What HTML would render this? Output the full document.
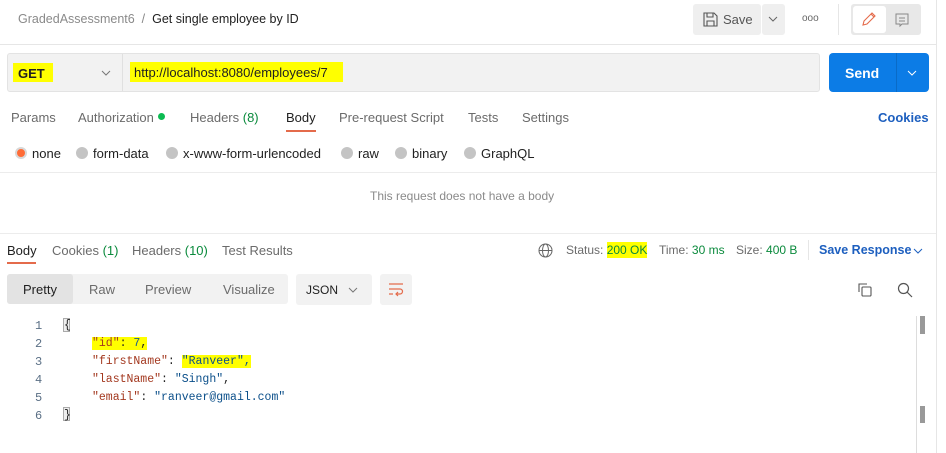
<!DOCTYPE html>
<html><head><style>
*{margin:0;padding:0;box-sizing:border-box}
body{width:946px;height:453px;background:#fff;font-family:"Liberation Sans",sans-serif;font-size:13px;color:#212121;position:relative;overflow:hidden}
.a{position:absolute;white-space:nowrap}
.g{color:#6b6b6b}
.hl{background:#ffff00}
.mono{font-family:"Liberation Mono",monospace;font-size:11.5px}
.rad{position:absolute;width:12px;height:12px;border-radius:50%;background:#c4c4c4}
.k{color:#a3381f}.s{color:#0b4f8a}
</style></head><body>
<div class="a" style="left:936px;top:0;width:1px;height:453px;background:#e6e6e6"></div>
<div class="a" style="left:0;top:44px;width:936px;height:1px;background:#e6e6e6"></div>
<div class="a" style="left:18px;top:12px;font-size:12.5px;color:#8a8a8a">GradedAssessment6 <span style="color:#888">&nbsp;/&nbsp;</span> <span style="color:#212121">Get single employee by ID</span></div>
<!-- save -->
<div class="a" style="left:693px;top:4px;width:68px;height:31px;background:#efefef;border-radius:3px"></div>
<svg class="a" style="left:703px;top:12px" width="15" height="15" viewBox="0 0 15 15" fill="none" stroke="#555" stroke-width="1.1"><path d="M1 1h10l3 3v10H1z M4 1v4h6V1 M4 14V9h7v5"/></svg>
<div class="a" style="left:723px;top:12px;font-size:13px;color:#555">Save</div>
<div class="a" style="left:762px;top:4px;width:23px;height:31px;background:#efefef;border-radius:3px"></div>
<svg class="a" style="left:768px;top:15px" width="10" height="8"><path d="M1 2l4 4 4-4" stroke="#666" fill="none"/></svg>
<div class="a" style="left:802px;top:13px;font-size:10px;color:#666">ooo</div>
<div class="a" style="left:838px;top:4px;width:1px;height:31px;background:#e6e6e6"></div>
<div class="a" style="left:851px;top:4px;width:70px;height:31px;background:#e8e8e8;border-radius:3px"></div>
<div class="a" style="left:853px;top:6px;width:33px;height:27px;background:#fff;border-radius:3px"></div>
<svg class="a" style="left:861px;top:11px" width="16" height="16" viewBox="0 0 16 16" fill="none" stroke="#e46b4b" stroke-width="1.1"><path d="M2 14l1-4 8-8 3 3-8 8z M10 3l3 3"/></svg>
<svg class="a" style="left:894px;top:12px" width="16" height="16" viewBox="0 0 16 16" fill="none" stroke="#888" stroke-width="1"><path d="M2 2h12v10H8l-2 2v-2H2z M5 6h6 M5 9h6"/></svg>
<!-- url bar -->
<div class="a" style="left:7px;top:53px;width:813px;height:39px;background:#f2f2f2;border:1px solid #e3e3e3;border-radius:3px"></div>
<div class="a" style="left:122px;top:54px;width:1px;height:37px;background:#e0e0e0"></div>
<div class="a hl" style="left:13px;top:63px;width:40px;height:19px"></div>
<div class="a" style="left:18px;top:66px;font-weight:bold;font-size:13px">GET</div>
<svg class="a" style="left:101px;top:69px" width="10" height="8"><path d="M1 2l4 4 4-4" stroke="#777" fill="none"/></svg>
<div class="a hl" style="left:130px;top:62px;width:213px;height:20px"></div>
<div class="a" style="left:134px;top:65px;font-size:13px;color:#212121">http://localhost:8080/employees/7</div>
<div class="a" style="left:829px;top:53px;width:100px;height:39px;background:#0c7ce6;border-radius:4px"></div>
<div class="a" style="left:896px;top:53px;width:1px;height:39px;background:#0a6bc7"></div>
<div class="a" style="left:845px;top:65px;font-weight:bold;font-size:14px;color:#fff">Send</div>
<svg class="a" style="left:907px;top:69px" width="10" height="8"><path d="M1 2l4 4 4-4" stroke="#fff" fill="none"/></svg>
<!-- tabs -->
<div class="a g" style="left:11px;top:110px">Params</div>
<div class="a g" style="left:78px;top:110px">Authorization</div>
<div class="a" style="left:158px;top:113px;width:7px;height:7px;border-radius:50%;background:#0cbb52"></div>
<div class="a g" style="left:190px;top:110px">Headers <span style="color:#0a8a3c">(8)</span></div>
<div class="a" style="left:286px;top:110px">Body</div>
<div class="a" style="left:286px;top:130px;width:30px;height:2px;background:#e46b4b"></div>
<div class="a g" style="left:339px;top:110px">Pre-request Script</div>
<div class="a g" style="left:468px;top:110px">Tests</div>
<div class="a g" style="left:522px;top:110px">Settings</div>
<div class="a" style="left:878px;top:110px;color:#1d5fbf;font-weight:bold">Cookies</div>
<!-- radios -->
<div class="rad" style="left:15px;top:147px;background:#ff6c37;border:2px solid #d8d8d8"></div>
<div class="a" style="left:32px;top:146px">none</div>
<div class="rad" style="left:76px;top:147px"></div><div class="a" style="left:93px;top:146px">form-data</div>
<div class="rad" style="left:166px;top:147px"></div><div class="a" style="left:183px;top:146px">x-www-form-urlencoded</div>
<div class="rad" style="left:341px;top:147px"></div><div class="a" style="left:358px;top:146px">raw</div>
<div class="rad" style="left:395px;top:147px"></div><div class="a" style="left:412px;top:146px">binary</div>
<div class="rad" style="left:464px;top:147px"></div><div class="a" style="left:481px;top:146px">GraphQL</div>
<div class="a" style="left:0;top:172px;width:936px;height:1px;background:#ececec"></div>
<div class="a" style="left:370px;top:189px;font-size:12px;color:#8a8a8a">This request does not have a body</div>
<div class="a" style="left:0;top:233px;width:936px;height:1px;background:#ececec"></div>
<!-- response tabs -->
<div class="a" style="left:7px;top:243px">Body</div>
<div class="a" style="left:7px;top:262px;width:29px;height:2px;background:#e46b4b"></div>
<div class="a g" style="left:52px;top:243px">Cookies <span style="color:#0a8a3c">(1)</span></div>
<div class="a g" style="left:132px;top:243px">Headers <span style="color:#0a8a3c">(10)</span></div>
<div class="a g" style="left:222px;top:243px">Test Results</div>
<svg class="a" style="left:538px;top:243px" width="15" height="15" viewBox="0 0 15 15" fill="none" stroke="#666" stroke-width="1"><circle cx="7.5" cy="7.5" r="6.5"/><ellipse cx="7.5" cy="7.5" rx="3" ry="6.5"/><path d="M1 7.5h13"/></svg>
<div class="a g" style="left:566px;top:243px;font-size:12px">Status: <span class="hl" style="color:#0a8a3c;padding:1px 0">200 OK</span></div>
<div class="a g" style="left:659px;top:243px;font-size:12px">Time: <span style="color:#0a8a3c">30 ms</span></div>
<div class="a g" style="left:736px;top:243px;font-size:12px">Size: <span style="color:#0a8a3c">400 B</span></div>
<div class="a" style="left:808px;top:240px;width:1px;height:20px;background:#e6e6e6"></div>
<div class="a" style="left:819px;top:243px;color:#1d5fbf;font-weight:bold;font-size:12.5px">Save Response</div>
<svg class="a" style="left:913px;top:247px" width="10" height="8"><path d="M1 2l4 4 4-4" stroke="#1d5fbf" fill="none"/></svg>
<!-- pretty toolbar -->
<div class="a" style="left:7px;top:274px;width:281px;height:30px;background:#f2f2f2;border-radius:3px"></div>
<div class="a" style="left:7px;top:274px;width:66px;height:30px;background:#e3e3e3;border-radius:3px"></div>
<div class="a" style="left:23px;top:282px">Pretty</div>
<div class="a g" style="left:89px;top:282px">Raw</div>
<div class="a g" style="left:145px;top:282px">Preview</div>
<div class="a g" style="left:223px;top:282px">Visualize</div>
<div class="a" style="left:296px;top:274px;width:76px;height:31px;background:#f2f2f2;border-radius:3px"></div>
<div class="a" style="left:306px;top:283px;font-size:12px">JSON</div>
<svg class="a" style="left:348px;top:286px" width="10" height="8"><path d="M1 2l4 4 4-4" stroke="#777" fill="none"/></svg>
<div class="a" style="left:380px;top:274px;width:32px;height:31px;background:#f2f2f2;border-radius:3px"></div>
<svg class="a" style="left:387px;top:281px" width="18" height="16" viewBox="0 0 18 16" fill="none" stroke="#e46b4b" stroke-width="1.2"><path d="M2 3h14 M2 8h11a2.5 2.5 0 0 1 0 5H9 M11 11l-2 2 2 2 M2 13h4"/></svg>
<svg class="a" style="left:857px;top:282px" width="16" height="16" viewBox="0 0 16 16" fill="none" stroke="#555" stroke-width="1.1"><path d="M2 10V2h8"/><rect x="5" y="5" width="9" height="9" rx="1"/></svg>
<svg class="a" style="left:897px;top:282px" width="16" height="16" viewBox="0 0 16 16" fill="none" stroke="#555" stroke-width="1.2"><circle cx="6.5" cy="6.5" r="5"/><path d="M10 10l5 5"/></svg>
<!-- code -->
<div class="a mono" style="left:35px;top:317px;color:#5a6f85;line-height:18px;font-size:12px">1<br>2<br>3<br>4<br>5<br>6</div>
<div class="a" style="left:63px;top:318px;width:7px;height:14px;border:1px solid #aaa;background:#eee"></div>
<div class="a" style="left:63px;top:407px;width:7px;height:14px;border:1px solid #aaa;background:#eee"></div>
<div class="a mono" style="left:64px;top:317px;line-height:18px;color:#222">{</div>
<div class="a mono" style="left:92px;top:335px;line-height:18px;color:#222">
<span class="hl"><span class="k">"id"</span>: <span style="color:#1d5b8f">7</span>,</span><br>
<span class="k">"firstName"</span>: <span class="hl s">"Ranveer",</span><br>
<span class="k">"lastName"</span>: <span class="s">"Singh"</span>,<br>
<span class="k">"email"</span>: <span class="s">"ranveer@gmail.com"</span></div>
<div class="a mono" style="left:64px;top:407px;line-height:18px;color:#222">}</div>
<div class="a" style="left:916px;top:316px;width:1px;height:137px;background:#ddd"></div>
<div class="a" style="left:920px;top:316px;width:5px;height:18px;background:#999"></div>
<div class="a" style="left:920px;top:406px;width:5px;height:17px;background:#999"></div>
</body></html>
